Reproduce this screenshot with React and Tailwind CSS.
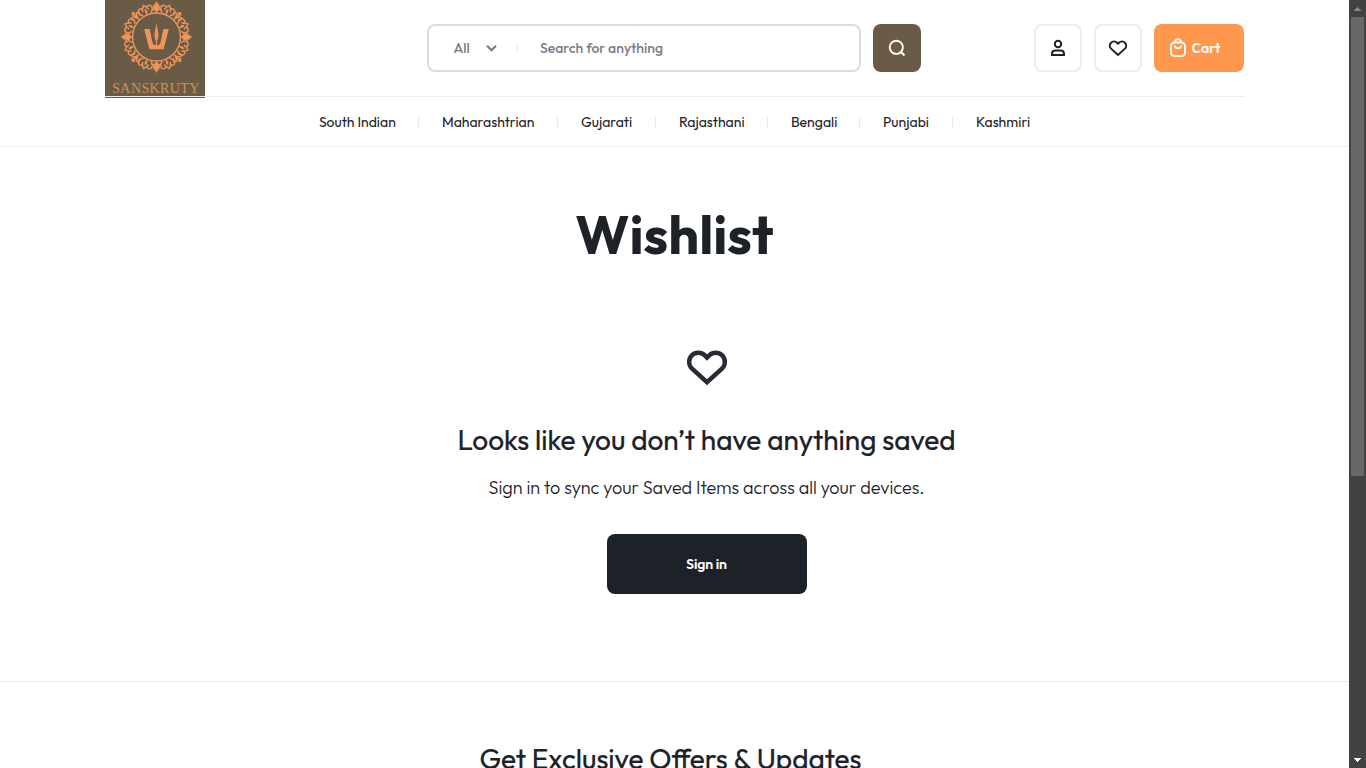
import React from "react";

const navItems = [
  { label: "South Indian", box: "w-[123px]" },
  { label: "Maharashtrian", box: "w-[139px]" },
  { label: "Gujarati", box: "w-[98px]" },
  { label: "Rajasthani", box: "w-[112px]" },
  { label: "Bengali", box: "w-[92px]" },
  { label: "Punjabi", box: "w-[93px]" },
  { label: "Kashmiri", box: "w-[55px]" },
];

function HeartIcon({ className }) {
  return (
    <svg viewBox="0 0 24 24" fill="none" stroke="currentColor" className={className}>
      <path strokeWidth="2.2" d="m12 7.300-1.100-1.100a4.650 4.650 0 0 0-6.500 0 4.650 4.650 0 0 0 0 6.500L12 19.600l7.600-6.900a4.650 4.650 0 0 0 0-6.500 4.650 4.650 0 0 0-6.500 0Z" />
    </svg>
  );
}

function UserIcon() {
  return (
    <svg width="16" height="18" viewBox="0 0 16 18" fill="none" stroke="currentColor" strokeWidth="2">
      <circle cx="8" cy="5" r="3.2" />
      <path d="M2 16v-1.2c0-2 1.5-3.3 3.5-3.3h5c2 0 3.5 1.3 3.5 3.3V16Z" />
    </svg>
  );
}

function BagIcon() {
  return (
    <svg width="18" height="20" viewBox="0 0 18 20" fill="none" stroke="currentColor" strokeWidth="1.9" strokeLinecap="round">
      <rect x="2" y="4.500" width="14" height="13.6" rx="3.6" />
      <path d="M5.7 4.300C6.2 2.2 7.400 1.100 9 1.100s2.8 1.100 3.3 3.200" />
      <path d="M5.8 8.100a3.3 2.900 0 0 0 6.400 0" />
    </svg>
  );
}

function Logo() {
  const petals = Array.from({ length: 16 }, (_, i) => i * 22.5);
  return (
    <div className="absolute left-0 top-0 flex h-[98px] w-[100px] flex-col items-center bg-[#695b46] text-[#f0955a]">
      <svg width="100" height="80" viewBox="0 0 100 80" fill="none" stroke="currentColor" className="shrink-0">
        <circle cx="51.5" cy="37" r="24" strokeWidth="1.4" />
        {petals.map((angle, i) => (
          <g key={angle} transform={`rotate(${angle} 51.5 37)`}>
            {i % 4 === 0 && (
              <path d="M51.5 1l1.500 3 1.300-.3-.6 2.200 2.300-.4-1.500 2.500 1.500 2-2.500.3-2 2.700-2-2.700-2.500-.3 1.500-2-1.500-2.500 2.300.4-.6-2.200 1.300.3Z" fill="currentColor" stroke="none" />
            )}
            {i % 4 === 2 && (
              <path d="M51.500 2.500v9M49.500 5l2-2 2 2M48.500 9.500c-2.500-.8-2.200-3.600-.4-3.500 1.600.2 2.600 2 3.400 5 .8-3 1.800-4.800 3.400-5 1.800-.1 2.100 2.700-.4 3.500" strokeWidth="1.500" />
            )}
            {i % 2 === 1 && (
              <>
                <path d="M47.500 12c-4-1.300-4.200-6.400-1-7.200 2.800-.4 3.400 3 1.200 3.400M55.500 12c4-1.300 4.200-6.400 1-7.200-2.800-.4-3.400 3-1.200 3.400M51.500 12.500V7M49 6l2.500-3 2.500 3" strokeWidth="1.400" />
                <circle cx="51.500" cy="9.500" r="1.300" fill="currentColor" stroke="none" />
              </>
            )}
          </g>
        ))}
        <path d="M39.200 29h5.400l2.900 13.400c.4 1.900 1.800 2.900 4 2.900s3.600-1 4-2.900L58.400 29h5.400l-5.200 20.200H44.400Z" fill="currentColor" stroke="none" />
        <path d="M51.500 22.500c.5 5.500 2 9.200 2 12.800 0 2.600-.7 4.400-1.400 5.600v5h-1.200v-5c-.7-1.200-1.400-3-1.400-5.600 0-3.600 1.500-7.300 2-12.800Z" fill="currentColor" stroke="none" />
      </svg>
      <span className="ml-[3px] whitespace-nowrap font-['Liberation_Serif',serif] text-[14px] leading-[18px] tracking-[0.4px] text-[#cf8f5d]">SANSKRUTY</span>
      <span className="absolute left-0 top-24 h-px w-full bg-[#e8ecf1]" />
    </div>
  );
}

function Header() {
  return (
    <header className="h-[147px] border-b border-[#edeef3]">
      <div className="relative mx-auto w-[1140px]">
        <div className="flex h-[97px] items-start border-b border-[#e9eef4] pt-6">
          <Logo />
          <div className="ml-[322px] flex h-12 w-[434px] items-center rounded-lg border-2 border-[#d9dee3] pl-[25px] text-[14px] font-medium text-[#7b7d86]">
            <span className="w-8">All</span>
            <svg width="12" height="8" viewBox="0 0 12 8" fill="none" stroke="currentColor" strokeWidth="2.2">
              <path d="M1 1.800 5.500 6.300l4.500-4.500" />
            </svg>
            <span className="ml-[19px] h-2.5 w-px bg-[#e8ecf1]" />
            <span className="ml-[22.5px]">Search for anything</span>
          </div>
          <button className="ml-3 flex size-12 items-center justify-center rounded-lg bg-[#695b46] text-white">
            <svg width="18" height="18" viewBox="0 0 18 18" fill="none" stroke="currentColor" strokeWidth="1.900">
              <circle cx="8.300" cy="8.300" r="6.600" />
              <path d="m13 13 3.500 3.500" />
            </svg>
          </button>
          <button className="ml-[113px] flex size-12 items-center justify-center rounded-lg border-2 border-[#ebeff4] text-[#1d2128]">
            <UserIcon />
          </button>
          <button className="ml-3 flex size-12 items-center justify-center rounded-lg border-2 border-[#ebeff4] text-[#1d2128]">
            <HeartIcon className="size-[22px]" />
          </button>
          <button className="ml-3 flex h-12 w-[90px] items-center rounded-lg bg-[#ff974f] pl-[15px] text-[14px] font-semibold text-white">
            <BagIcon />
            <span className="ml-[5px]">Cart</span>
          </button>
        </div>
        <nav className="flex h-[49px] items-center pl-[214px] text-[14px] text-[#1d2128]">
          {navItems.map((item, i) => (
            <div key={item.label} className={`flex shrink-0 items-center justify-between whitespace-nowrap ${item.box}`}>
              <span className="pl-[0.4px] pt-0.5">{item.label}</span>
              {i < navItems.length - 1 && <span className="mr-[23px] h-3 w-px bg-[#e9eaf0]" />}
            </div>
          ))}
        </nav>
      </div>
    </header>
  );
}

function Scrollbar() {
  return (
    <div className="flex h-full w-[17px] shrink-0 flex-col items-center bg-[#424242]">
      <div className="flex h-[17px] items-center">
        <svg width="7" height="4" viewBox="0 0 7 4" fill="#888888"><path d="M3 0h1v1h1v1h1v1h1v1H0V3h1V2h1V1h1Z" /></svg>
      </div>
      <div className="h-[459px] w-[13px] bg-[#686868]" />
      <div className="mt-auto flex h-[17px] items-center">
        <svg width="7" height="4" viewBox="0 0 7 4" fill="#ffffff"><path d="M0 0h7v1H6v1H5v1H4v1H3V3H2V2H1V1H0Z" /></svg>
      </div>
    </div>
  );
}

export default function App() {
  return (
    <div className="flex h-[768px] w-[1366px] overflow-hidden bg-white font-['Outfit','Lato',sans-serif] text-[#1d2128]">
      <div className="h-full w-[1349px] overflow-hidden">
        <Header />
        <main className="flex h-[535px] flex-col items-center border-b border-[#eeeeee] pt-[52px]">
          <h1 className="h-[70px] whitespace-nowrap text-[54px] font-bold leading-[70px]">Wishlist</h1>
          <section className="ml-[64px] flex flex-col items-center pt-[74px]">
            <HeartIcon className="size-12 text-[#272b33]" />
            <h2 className="mt-[31px] h-9 whitespace-nowrap text-[28px] leading-9 [-webkit-text-stroke:0.2px_currentColor]">Looks like you don’t have anything saved</h2>
            <p className="mt-[18px] h-6 whitespace-nowrap text-[18px] font-light leading-6">Sign in to sync your Saved Items across all your devices.</p>
            <button className="mt-[34px] h-[60px] w-[200px] rounded-lg bg-[#1d2128] text-[14px] font-semibold tracking-[-0.1px] text-white">Sign in</button>
          </section>
        </main>
        <footer className="flex justify-center pt-[59px]">
          <h2 className="mr-2 whitespace-nowrap text-[28px] leading-9 [-webkit-text-stroke:0.2px_currentColor]">Get Exclusive Offers &amp; Updates</h2>
        </footer>
      </div>
      <Scrollbar />
    </div>
  );
}
